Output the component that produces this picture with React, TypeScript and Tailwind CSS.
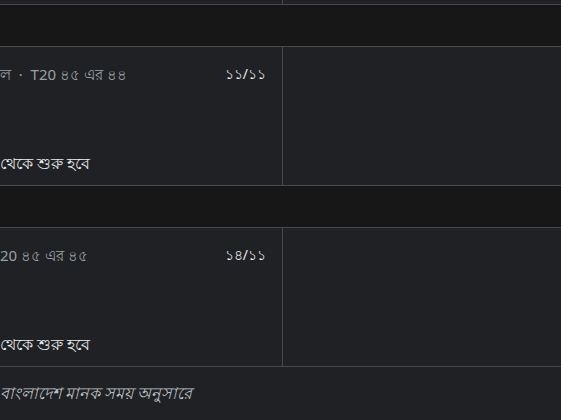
import React from "react";

type Match = {
  title: string;
  date: string;
  start: string;
};

const matches: Match[] = [
  { title: "ল  ·  T20 ৪৫ এর ৪৪", date: "১১/১১", start: "থেকে শুরু হবে" },
  { title: "20 ৪৫ এর ৪৫", date: "১৪/১১", start: "থেকে শুরু হবে" },
];

const MatchCard = ({ match }: { match: Match }) => (
  <div className="flex h-[139px] border-b border-[#46494d] bg-[#202124]">
    <div className="flex w-[283px] flex-col justify-between border-r border-[#46494d] pb-[10px] pr-[16px] pt-[15px]">
      <div className="flex items-center justify-between leading-6">
        <p className="whitespace-pre text-[15px] text-[#9aa0a6]">{match.title}</p>
        <p className="text-[14px] text-[#e8eaed]">{match.date}</p>
      </div>
      <p className="text-[16px] leading-6 text-[#e8eaed]">{match.start}</p>
    </div>
    <div className="flex-1" />
  </div>
);

const App = () => {
  return (
    <div
      className="h-[420px] w-[561px] overflow-hidden bg-[#202124]"
      style={{ fontFamily: '"Noto Sans", "Liberation Sans", sans-serif' }}
    >
      <div className="flex h-[5px] border-b border-[#46494d]">
        <div className="w-[283px] border-r border-[#46494d]" />
      </div>
      <div className="h-[42px] border-b border-[#46494d] bg-[#171717]" />
      <MatchCard match={matches[0]} />
      <div className="h-[42px] border-b border-[#46494d] bg-[#171717]" />
      <MatchCard match={matches[1]} />
      <div className="pt-[14px]">
        <p className="text-[16px] italic leading-6 text-[#bdc1c6]">বাংলাদেশ মানক সময় অনুসারে</p>
      </div>
    </div>
  );
};

export default App;
